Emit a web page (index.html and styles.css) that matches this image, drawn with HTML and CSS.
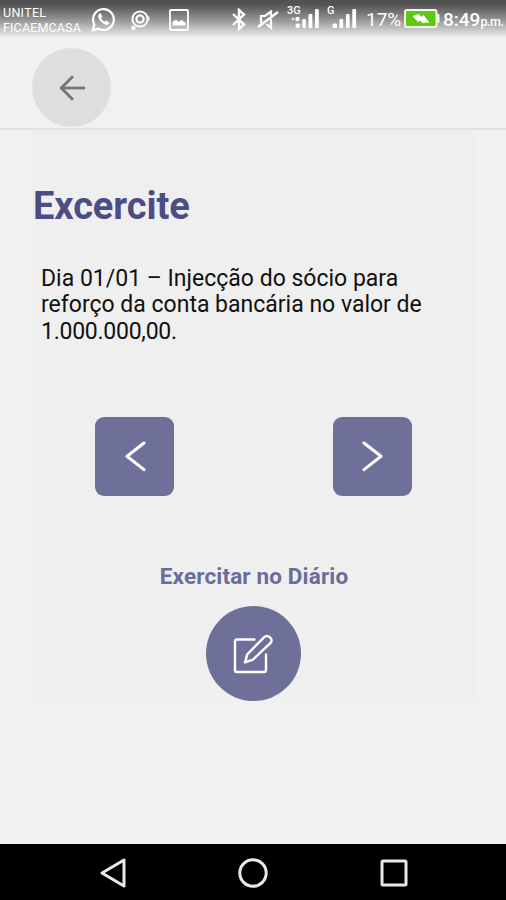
FILE: index.html
```
<!DOCTYPE html>
<html lang="pt">
<head>
    <meta charset="UTF-8">
    <meta name="viewport" content="width=device-width, initial-scale=1.0">
    <title>Excercite</title>
    <link rel="stylesheet" href="styles.css">
</head>
<body>
    <div class="status-bar">
        <div class="carrier">
            <span class="carrier-name">UNITEL</span>
            <span class="carrier-tag">FICAEMCASA</span>
        </div>
        <svg class="icon-whatsapp" width="25" height="26" viewBox="0 0 25 26" fill="none" stroke="#fff">
            <path d="M1.6 23.4 L3.4 17.6 A10.4 10.4 0 1 1 7.4 21.6 Z" stroke-width="2.2" stroke-linejoin="round"/>
            <path d="M8.4 6.4 C6.2 8.4 7 11.6 10.4 15 C13.8 18.3 17 18.6 18.6 16.4 L15.4 13.6 L13.6 14.8 C11.6 13.8 10.9 12.8 10.1 11.2 L11.3 9.6 L9.8 6.2 Z" fill="#fff" stroke="none"/>
        </svg>
        <svg class="icon-location" width="22" height="22" viewBox="0 0 22 22" fill="none" stroke="#fff">
            <circle cx="10" cy="9" r="7.6" stroke-width="2"/>
            <circle cx="10" cy="9" r="3.6" stroke-width="2.2"/>
            <circle cx="3.3" cy="18" r="2.2" fill="#fff" stroke="none"/>
            <path d="M18.8 6.5 V10.5" stroke-width="2" opacity="0.6"/>
        </svg>
        <svg class="icon-image" width="20" height="22" viewBox="0 0 20 22">
            <rect x="1" y="1" width="18" height="20" rx="1" fill="none" stroke="#fff" stroke-width="1.8"/>
            <path d="M3.5 16.5 V13 L7 10.5 L9.5 13 L12.5 11 L16.5 13.5 V16.5 Z" fill="#fff"/>
        </svg>
        <svg class="icon-bluetooth" width="16" height="23" viewBox="0 0 16 23" fill="none" stroke="#fff" stroke-width="2.4">
            <path d="M2 6 L13 16.5 L8 21 V2 L13 6.5 L2 17"/>
        </svg>
        <svg class="icon-mute" width="22" height="20" viewBox="0 0 22 20" fill="none" stroke="#fff" stroke-width="2.2">
            <path d="M1 17 L21 2"/>
            <path d="M4 13 V6 H8 L14 1.5 V6"/>
            <path d="M9.5 14 L14 18 V9"/>
        </svg>
        <svg class="icon-signal-3g" width="33" height="24" viewBox="0 0 33 24" fill="#fff">
            <text class="net-label" x="0" y="9">3G</text>
            <circle cx="6" cy="14" r="1.6" opacity="0.7"/>
            <circle cx="10.5" cy="14" r="2.2"/>
            <rect x="8.5" y="18.5" width="4.5" height="4.5" rx="1.8"/>
            <rect x="15.3" y="14" width="3.6" height="9" rx="1"/>
            <rect x="21.5" y="9" width="3.8" height="14" rx="1"/>
            <rect x="28" y="4" width="3.8" height="19" rx="1"/>
        </svg>
        <svg class="icon-signal-g" width="30" height="24" viewBox="0 0 30 24" fill="#fff">
            <text class="net-label" x="0" y="9">G</text>
            <rect x="5.5" y="18.5" width="4.5" height="4.5" rx="1.5"/>
            <rect x="12.5" y="14" width="3.6" height="9" rx="1"/>
            <rect x="19" y="9" width="3.6" height="14" rx="1"/>
            <rect x="25.3" y="4" width="3.8" height="19" rx="1"/>
        </svg>
        <span class="battery-level">17%</span>
        <svg class="icon-battery" width="36" height="19" viewBox="0 0 36 19">
            <rect x="1" y="1" width="31.5" height="17" rx="2" fill="#5fc814" stroke="#f1f5ee" stroke-width="2"/>
            <rect x="33" y="5" width="2.5" height="9" rx="1" fill="#f1f5ee"/>
            <path d="M8.5 7 L14.5 5 L17.5 8 L19.5 6 L25.5 13.5 L18.5 14 L16 11.5 L14 13 Z" fill="#fff"/>
        </svg>
        <span class="clock">8:49<small>p.m.</small></span>
    </div>

    <div class="header">
        <button class="back-button" aria-label="Voltar">
            <svg width="26" height="26" viewBox="0 0 26 26" fill="none" stroke="#757575" stroke-width="2.8">
                <path d="M26 13 H2.5"/>
                <path d="M14 1.2 L2.2 13 L14 24.8"/>
            </svg>
        </button>
    </div>

    <div class="content">
        <h1>Excercite</h1>
        <p class="question">Dia 01/01 – Injecção do sócio para<br>reforço da conta bancária no valor de<br><span class="amount">1.000.000,00.</span></p>

        <div class="nav-buttons">
            <button class="nav-button" aria-label="Anterior">
                <svg width="22" height="32" viewBox="0 0 22 32">
                    <path d="M19 3 L2 16.3 L19 29.6"/>
                </svg>
            </button>
            <button class="nav-button" aria-label="Seguinte">
                <svg width="22" height="32" viewBox="0 0 22 32">
                    <path d="M2 3 L19 16.3 L2 29.6"/>
                </svg>
            </button>
        </div>

        <h2>Exercitar no Diário</h2>
        <button class="edit-button" aria-label="Exercitar no Diário">
            <svg width="40" height="40" viewBox="0 0 40 40" fill="none" stroke="#fff" stroke-width="2.4" stroke-linecap="round" stroke-linejoin="round">
                <path d="M21.5 5.5 H4 Q2 5.5 2 7.5 V36 Q2 38 4 38 H31 Q33 38 33 36 V20.5"/>
                <path d="M12 28.3 L14.3 20.3 L31.2 3.2 Q34 0.8 37 3.3 Q40 6.3 37.3 9.1 L20 25.6 Z"/>
            </svg>
        </button>
    </div>

    <div class="system-nav">
        <svg width="26" height="30" viewBox="0 0 26 30">
            <path d="M24 2 V28 L2 15 Z"/>
        </svg>
        <svg width="30" height="30" viewBox="0 0 30 30">
            <circle cx="15" cy="15" r="13.2"/>
        </svg>
        <svg width="28" height="28" viewBox="0 0 28 28">
            <rect x="2" y="2" width="24" height="24" rx="1"/>
        </svg>
    </div>
</body>
</html>
```
FILE: styles.css
```
* {
    box-sizing: border-box;
}
body {
    margin: 0;
    width: 506px;
    height: 900px;
    display: flex;
    flex-direction: column;
    background: #f1f1f1;
    font-family: Roboto, "Liberation Sans", sans-serif;
    overflow: hidden;
}
h1, h2, p {
    margin: 0;
}
svg {
    display: block;
    flex: none;
}
button {
    display: flex;
    align-items: center;
    justify-content: center;
    padding: 0;
    border: none;
    cursor: pointer;
}

/* Status bar */
.status-bar {
    display: flex;
    align-items: flex-start;
    height: 38px;
    padding-left: 3px;
    background: linear-gradient(#505050 0, #555 5px, #8c8c8c 18px, #c4c4c4 29px, #f1f1f1 38px);
    color: #fff;
    white-space: nowrap;
}
.carrier {
    width: 79px;
    padding-top: 5px;
    font-size: 12.5px;
    line-height: 15px;
}
.carrier-name, .carrier-tag {
    display: block;
}
.carrier-name {
    letter-spacing: 0.3px;
}
.carrier-tag {
    letter-spacing: 0.15px;
}
.icon-whatsapp {
    margin: 7px 0 0 9px;
}
.icon-location {
    margin: 10px 0 0 14px;
}
.icon-image {
    margin: 9px 0 0 17px;
}
.icon-bluetooth {
    margin: 8px 0 0 42px;
}
.icon-mute {
    margin: 10px 0 0 10px;
}
.icon-signal-3g {
    margin: 5px 0 0 8px;
}
.icon-signal-g {
    margin: 5px 0 0 7px;
}
.net-label {
    font-size: 11px;
    font-weight: 500;
}
.battery-level {
    width: 38px;
    margin: 9px 0 0 9px;
    font-size: 19px;
    line-height: 22px;
}
.icon-battery {
    margin-top: 9px;
}
.clock {
    margin: 9px 0 0 3px;
    font-size: 19px;
    font-weight: 500;
    line-height: 22px;
}
.clock small {
    font-size: 12.5px;
    letter-spacing: -0.5px;
}

/* Header */
.header {
    height: 92px;
    padding: 10px 32px 0;
    border-bottom: 2px solid #e2e2e2;
}
.back-button {
    width: 79px;
    height: 79px;
    border-radius: 50%;
    background: #dedede;
}

/* Exercise */
.content {
    display: flex;
    flex-direction: column;
    height: 571px;
    margin: 0 31px 0 32px;
    padding-top: 53px;
    background: #efefef;
}
h1 {
    padding-left: 1px;
    font-size: 38px;
    font-weight: 700;
    line-height: 46px;
    letter-spacing: -0.1px;
    color: #4c4d85;
}
.question {
    margin: 37px 0 0 9px;
    font-size: 23px;
    line-height: 26.3px;
    color: #111;
    white-space: nowrap;
}
.amount {
    letter-spacing: -0.25px;
}
.nav-buttons {
    display: flex;
    justify-content: space-between;
    margin: 72px 63px 0;
}
.nav-button {
    width: 79px;
    height: 79px;
    border-radius: 9px;
    background: #6f7099;
}
.nav-button svg {
    fill: none;
    stroke: #fff;
    stroke-width: 3;
    stroke-linecap: round;
    stroke-linejoin: round;
}
.nav-button:first-child svg {
    margin-left: 2px;
}
h2 {
    margin-top: 67px;
    padding-left: 1px;
    font-size: 22.5px;
    font-weight: 700;
    line-height: 27px;
    letter-spacing: 0.15px;
    text-align: center;
    color: #6b6c9b;
}
.edit-button {
    align-self: center;
    width: 95px;
    height: 95px;
    margin-top: 16px;
    padding: 2px 1px 0 0;
    border-radius: 50%;
    background: #6f7099;
}

/* Android navigation */
.system-nav {
    display: flex;
    align-items: center;
    justify-content: space-between;
    height: 56px;
    margin-top: auto;
    padding: 1px 98px 0 100px;
    background: #000;
}
.system-nav svg {
    fill: none;
    stroke: #e9e9e9;
    stroke-width: 3;
    stroke-linejoin: round;
}
```
